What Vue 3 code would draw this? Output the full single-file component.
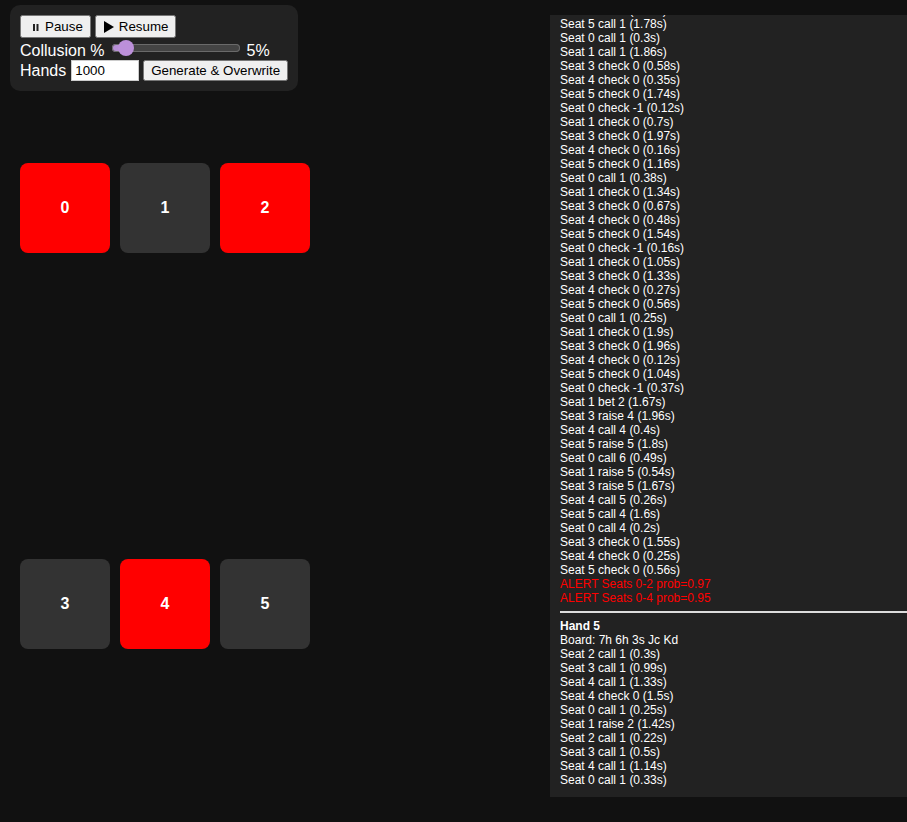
<script setup>
const before = `Seat 4 call 1 (1.25s)
Seat 5 call 1 (1.78s)
Seat 0 call 1 (0.3s)
Seat 1 call 1 (1.86s)
Seat 3 check 0 (0.58s)
Seat 4 check 0 (0.35s)
Seat 5 check 0 (1.74s)
Seat 0 check -1 (0.12s)
Seat 1 check 0 (0.7s)
Seat 3 check 0 (1.97s)
Seat 4 check 0 (0.16s)
Seat 5 check 0 (1.16s)
Seat 0 call 1 (0.38s)
Seat 1 check 0 (1.34s)
Seat 3 check 0 (0.67s)
Seat 4 check 0 (0.48s)
Seat 5 check 0 (1.54s)
Seat 0 check -1 (0.16s)
Seat 1 check 0 (1.05s)
Seat 3 check 0 (1.33s)
Seat 4 check 0 (0.27s)
Seat 5 check 0 (0.56s)
Seat 0 call 1 (0.25s)
Seat 1 check 0 (1.9s)
Seat 3 check 0 (1.96s)
Seat 4 check 0 (0.12s)
Seat 5 check 0 (1.04s)
Seat 0 check -1 (0.37s)
Seat 1 bet 2 (1.67s)
Seat 3 raise 4 (1.96s)
Seat 4 call 4 (0.4s)
Seat 5 raise 5 (1.8s)
Seat 0 call 6 (0.49s)
Seat 1 raise 5 (0.54s)
Seat 3 raise 5 (1.67s)
Seat 4 call 5 (0.26s)
Seat 5 call 4 (1.6s)
Seat 0 call 4 (0.2s)
Seat 3 check 0 (1.55s)
Seat 4 check 0 (0.25s)
Seat 5 check 0 (0.56s)`.split('\n')
const alerts = ['ALERT Seats 0-2 prob=0.97', 'ALERT Seats 0-4 prob=0.95']
const after = `Board: 7h 6h 3s Jc Kd
Seat 2 call 1 (0.3s)
Seat 3 call 1 (0.99s)
Seat 4 call 1 (1.33s)
Seat 4 check 0 (1.5s)
Seat 0 call 1 (0.25s)
Seat 1 raise 2 (1.42s)
Seat 2 call 1 (0.22s)
Seat 3 call 1 (0.5s)
Seat 4 call 1 (1.14s)
Seat 0 call 1 (0.33s)`.split('\n')
const seats = [
  { id: 0, hot: true }, { id: 1, hot: false }, { id: 2, hot: true },
  { id: 3, hot: false }, { id: 4, hot: true }, { id: 5, hot: false },
]
</script>

<template>
  <div class="page">
    <div class="left">
      <div class="panel">
        <div class="row">
          <button class="icon-btn">
            <svg width="15" height="12" viewBox="0 0 15 12"><path d="M5 3h2v7H5zM8.5 3h2v7h-2z" fill="#222" /></svg>
            <span>Pause</span>
          </button>
          <button class="icon-btn">
            <svg width="14" height="14" viewBox="0 0 14 14"><path d="M1 1l10 6-10 6z" fill="#000" /></svg>
            <span>Resume</span>
          </button>
        </div>
        <div class="row slider-row">
          <label>Collusion %</label>
          <input class="range" type="range" min="0" max="100" value="5" />
          <span class="pct">5%</span>
        </div>
        <div class="row hands-row">
          <label>Hands</label>
          <input class="num" type="number" value="1000" />
          <button class="gen">Generate &amp; Overwrite</button>
        </div>
      </div>
      <div class="table">
        <div v-for="s in seats" :key="s.id" class="seat" :class="{ hot: s.hot }">{{ s.id }}</div>
      </div>
    </div>
    <div class="log">
      <div v-for="(l, i) in before" :key="'b' + i">{{ l }}</div>
      <div v-for="(l, i) in alerts" :key="'a' + i" class="alert">{{ l }}</div>
      <hr />
      <div class="hand">Hand 5</div>
      <div v-for="(l, i) in after" :key="'c' + i">{{ l }}</div>
    </div>
  </div>
</template>

<style>
html, body { margin: 0; background: #111; overflow: hidden; }
</style>

<style scoped>
.page {
  width: 907px;
  height: 822px;
  background: #111;
  color: #fff;
  font-family: "Liberation Sans", Arial, sans-serif;
  display: flex;
  overflow: hidden;
}
.left { width: 550px; flex: none; padding: 5px 0 0 10px; box-sizing: border-box; }
.panel {
  width: 288px;
  height: 86px;
  box-sizing: border-box;
  background: #222;
  border-radius: 10px;
  padding: 10px;
}
.row { display: flex; align-items: center; gap: 4px; height: 23px; }
.slider-row { height: 22px; align-items: flex-start; gap: 0; }
.slider-row label, .pct { margin-top: 4px; }
.hands-row { height: 21px; }
button {
  font-family: "Liberation Sans", Arial, sans-serif;
  font-size: 13.333px;
  height: 23px;
  color: #000;
  white-space: nowrap;
  box-sizing: border-box;
}
.icon-btn {
  display: inline-flex;
  align-items: center;
  gap: 2px;
  padding: 0 6px;
}
.icon-btn svg { display: block; }
.gen { width: 145px; padding: 0; height: 21px; }
.range {
  -webkit-appearance: none;
  appearance: none;
  width: 128px;
  height: 16px;
  margin: 2px 6px 0 8px;
  padding: 0;
  background: transparent;
}
.range::-webkit-slider-runnable-track {
  height: 8px;
  border-radius: 4px;
  background: linear-gradient(to right, #b78fd6 0 10px, #444 10px);
  box-shadow: inset 0 0 0 1px #6a6a6a;
}
.range::-webkit-slider-thumb {
  -webkit-appearance: none;
  appearance: none;
  width: 16px;
  height: 16px;
  margin-top: -4px;
  border-radius: 50%;
  background: #bc90da;
  border: 0;
}
.num {
  width: 68px;
  height: 21px;
  box-sizing: border-box;
  font-family: "Liberation Sans", Arial, sans-serif;
  font-size: 13.333px;
  margin: 0 0 0 1px;
  padding: 1px 2px 1px 3px;
  border: 1px solid #ccc;
  background: #fff;
  color: #000;
}
.table {
  margin: 72px 0 0 10px;
  display: grid;
  grid-template-columns: repeat(3, 90px);
  column-gap: 10px;
  row-gap: 306px;
}
.seat {
  width: 90px;
  height: 90px;
  border-radius: 8px;
  background: #333;
  display: flex;
  align-items: center;
  justify-content: center;
  font-size: 16px;
  font-weight: 700;
  color: #fff;
}
.seat.hot { background: #f00; }
.log {
  width: 400px;
  flex: none;
  height: 782px;
  margin-top: 15px;
  box-sizing: border-box;
  background: #222;
  padding: 10px;
  overflow: hidden;
  display: flex;
  flex-direction: column;
  justify-content: flex-end;
  font-size: 12px;
  line-height: 14px;
  color: #fff;
}
.log > * { flex: none; }
.alert { color: #f00; }
.hand { font-weight: 700; }
hr { width: 100%; margin: 6px 0; border: 0; height: 2px; background: #ddd; }
</style>
